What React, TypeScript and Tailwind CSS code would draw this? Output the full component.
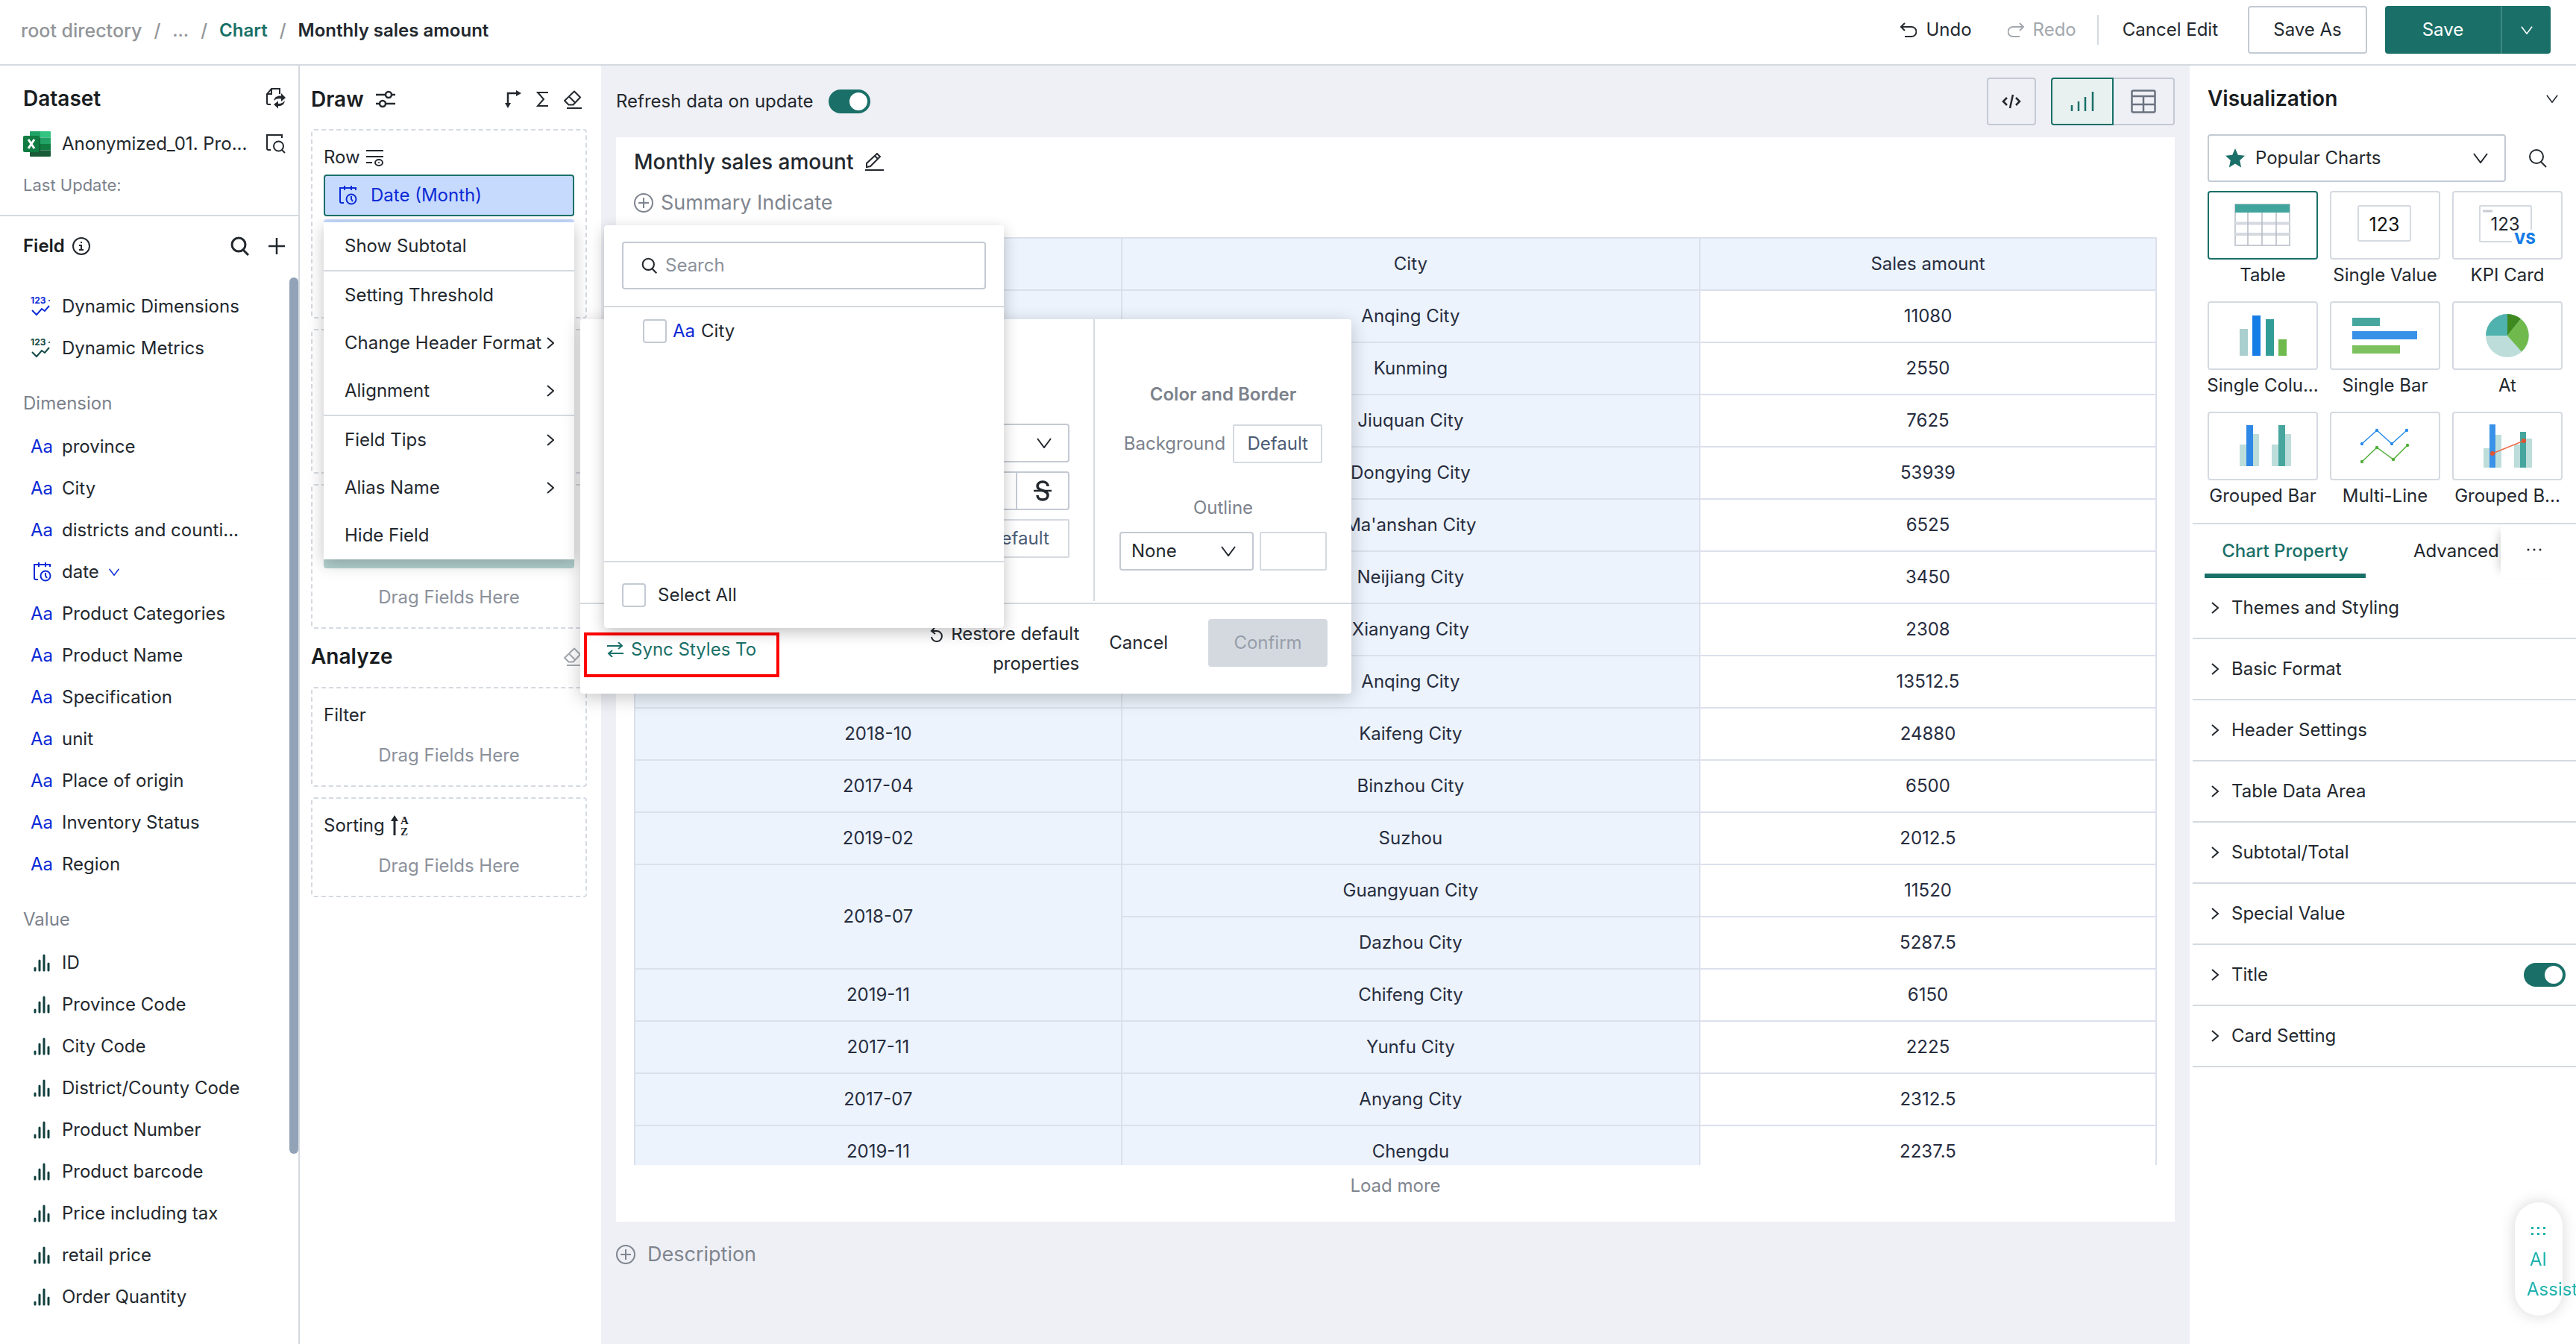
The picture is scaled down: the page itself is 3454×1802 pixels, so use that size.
import { useState } from 'react'
import type { ReactNode } from 'react'
import clsx from 'clsx'

interface SalesRow {
  date?: string
  span?: number
  city: string
  amount: string
}

const salesRows: SalesRow[] = [
  { date: '2018-05', city: 'Anqing City', amount: '11080' },
  { date: '2018-11', city: 'Kunming', amount: '2550' },
  { date: '2019-05', city: 'Jiuquan City', amount: '7625' },
  { date: '2018-06', city: 'Dongying City', amount: '53939' },
  { date: '2017-09', city: "Ma'anshan City", amount: '6525' },
  { date: '2018-02', city: 'Neijiang City', amount: '3450' },
  { date: '2017-12', city: 'Xianyang City', amount: '2308' },
  { date: '2019-08', city: 'Anqing City', amount: '13512.5' },
  { date: '2018-10', city: 'Kaifeng City', amount: '24880' },
  { date: '2017-04', city: 'Binzhou City', amount: '6500' },
  { date: '2019-02', city: 'Suzhou', amount: '2012.5' },
  { date: '2018-07', span: 2, city: 'Guangyuan City', amount: '11520' },
  { city: 'Dazhou City', amount: '5287.5' },
  { date: '2019-11', city: 'Chifeng City', amount: '6150' },
  { date: '2017-11', city: 'Yunfu City', amount: '2225' },
  { date: '2017-07', city: 'Anyang City', amount: '2312.5' },
  { date: '2019-11', city: 'Chengdu', amount: '2237.5' },
]

const dimensions = [
  'province',
  'City',
  'districts and counti...',
  'date',
  'Product Categories',
  'Product Name',
  'Specification',
  'unit',
  'Place of origin',
  'Inventory Status',
  'Region',
]

const values = [
  'ID',
  'Province Code',
  'City Code',
  'District/County Code',
  'Product Number',
  'Product barcode',
  'Price including tax',
  'retail price',
  'Order Quantity',
]

const chartTypes = [
  'Table',
  'Single Value',
  'KPI Card',
  'Single Colu...',
  'Single Bar',
  'At',
  'Grouped Bar',
  'Multi-Line',
  'Grouped B...',
]

const properties = [
  'Themes and Styling',
  'Basic Format',
  'Header Settings',
  'Table Data Area',
  'Subtotal/Total',
  'Special Value',
  'Title',
  'Card Setting',
]

const ChevronDown = ({ className = 'h-3.5 w-5' }: { className?: string }) => (
  <svg className={className} viewBox="0 0 20 14" fill="none" stroke="currentColor" strokeWidth="2">
    <path d="M1 1l9 12 9-12" />
  </svg>
)

const ChevronRight = () => (
  <svg className="h-4 w-[10px] shrink-0" viewBox="0 0 10 16" fill="none" stroke="currentColor" strokeWidth="2">
    <path d="M1 1l8 7-8 7" />
  </svg>
)

const SearchIcon = ({ className, strokeWidth = 2 }: { className: string; strokeWidth?: number }) => (
  <svg className={className} viewBox="0 0 26 26" fill="none" stroke="currentColor" strokeWidth={strokeWidth}>
    <circle cx="11" cy="11" r="9" />
    <path d="M17 18l7 7" />
  </svg>
)

const EraserIcon = () => (
  <svg className="h-[26px] w-[26px]" viewBox="0 0 26 26" fill="none" stroke="currentColor" strokeWidth="2">
    <path d="M15 2.5l8 8-9.500 10H7.500L2 15z" strokeLinejoin="round" />
    <path d="M8 9.500l8 8M5 25h20" />
  </svg>
)

const CirclePlusIcon = () => (
  <svg className="h-[26px] w-[26px]" viewBox="0 0 26 26" fill="none" stroke="currentColor" strokeWidth="2">
    <circle cx="13" cy="13" r="12" />
    <path d="M13 6v14M6 13h14" />
  </svg>
)

const DateIcon = () => (
  <svg className="h-[26px] w-6" viewBox="0 0 24 26" fill="none" stroke="currentColor" strokeWidth="2">
    <path d="M6 23H3a2 2 0 0 1-2-2V3h21v3M7 0v6M16 0v6" />
    <circle cx="16" cy="18" r="6.500" />
    <path d="M16 14v4l2 3" />
  </svg>
)

const DynamicIcon = () => (
  <svg className="h-7 w-[26px] overflow-visible" viewBox="0 0 26 28" fill="none" stroke="currentColor" strokeWidth="2">
    <text x="0" y="10" fontSize="12" fontWeight="700" fontFamily="Inter" fill="currentColor" stroke="none">
      123
    </text>
    <circle cx="25" cy="6" r="1" fill="currentColor" stroke="none" />
    <path d="M2 19l6 6 7-8 4 3 6-7" />
  </svg>
)

const ValueIcon = () => (
  <svg className="h-6 w-[22px]" viewBox="0 0 22 24" fill="none" stroke="currentColor" strokeWidth="3" strokeLinecap="round">
    <path d="M2 19v3M8 9v13M14 2v20M20 13v9" />
  </svg>
)

const ExcelIcon = () => (
  <svg className="h-[34px] w-[37px]" viewBox="0 0 37 34">
    <path d="M9 1a1 1 0 0 1 1-1h13v8.500H9z" fill="#21a366" />
    <path d="M23 0h13a1 1 0 0 1 1 1v7.500H23z" fill="#33c481" />
    <path d="M9 8.500h14V17H9z" fill="#107c41" />
    <path d="M23 8.500h14V17H23z" fill="#21a366" />
    <path d="M23 17h14v8.500H23z" fill="#107c41" />
    <path d="M9 17h14v8.500h14V33a1 1 0 0 1-1 1H10a1 1 0 0 1-1-1z" fill="#185c37" />
    <path d="M9 8h12a2 2 0 0 1 2 2v18H9z" fill="#000" opacity=".25" />
    <rect y="6" width="22" height="22" rx="2" fill="#107c41" />
    <path d="M7 11l8 12M15 11L7 23" stroke="#fff" strokeWidth="3" />
  </svg>
)

const Toggle = ({ label, defaultChecked = true }: { label: string; defaultChecked?: boolean }) => (
  <input
    type="checkbox"
    role="switch"
    aria-label={label}
    defaultChecked={defaultChecked}
    className="flex h-8 w-14 shrink-0 appearance-none items-center rounded-full bg-gray-300 px-1 before:size-6 before:rounded-full before:bg-white checked:justify-end checked:bg-[#1a7068]"
  />
)

const checkboxClass =
  'size-8 shrink-0 appearance-none rounded-sm border-2 border-[#c3cad3] bg-white checked:bg-[#1a7068]'

function TopBar() {
  return (
    <header className="flex h-[88px] items-center justify-between border-b-2 border-[#d5dae1] pl-7 pr-[34px]">
      <nav className="flex items-center gap-4 pb-1 font-medium text-[#929599]">
        <a href="#root" className="text-[25px]">root directory</a>
        <span>/</span>
        <a href="#parent">...</a>
        <span>/</span>
        <a href="#chart" className="font-semibold text-[#1a7068]">Chart</a>
        <span>/</span>
        <span className="font-semibold text-[#23282e]">Monthly sales amount</span>
      </nav>
      <div className="flex items-center pb-1.5">
        <button className="flex items-center gap-3">
          <svg className="h-5 w-[22px]" viewBox="0 0 22 20" fill="none" stroke="currentColor" strokeWidth="2">
            <path d="M6 1L1 6l5 5M1 6h14a6 6 0 0 1 0 13H6" />
          </svg>
          Undo
        </button>
        <button className="ml-12 flex items-center gap-3 text-[#a3a8ae]">
          <svg className="h-5 w-[22px]" viewBox="0 0 22 20" fill="none" stroke="currentColor" strokeWidth="2">
            <path d="M16 1l5 5-5 5M21 6H7a6 6 0 0 0 0 13h9" />
          </svg>
          Redo
        </button>
        <span className="ml-7 mr-8 h-10 w-0.5 bg-[#d5dae1]" />
        <button>Cancel Edit</button>
        <button className="ml-10 h-16 w-40 rounded-sm border-2 border-[#c3cad3]">Save As</button>
        <div className="ml-6 flex h-16 divide-x-2 divide-[#3d8a82] overflow-hidden rounded-sm bg-[#1a7068] text-white">
          <button className="w-[157px]">Save</button>
          <button aria-label="More save options" className="flex w-[65px] items-center justify-center">
            <ChevronDown className="h-[11px] w-[18px]" />
          </button>
        </div>
      </div>
    </header>
  )
}

function FieldRow({ icon, children }: { icon: ReactNode; children: ReactNode }) {
  return (
    <li className="flex h-14 items-center">
      <span className="flex w-[52px] shrink-0 items-center pl-2.5">{icon}</span>
      {children}
    </li>
  )
}

const Aa = () => <span className="text-[#0c2bd6]">Aa</span>

function DatasetPanel() {
  return (
    <aside className="w-[402px] shrink-0 border-r-2 border-[#d5dae1]">
      <section className="border-b-2 border-[#d5dae1] pb-6 pl-[31px] pr-[17px]">
        <div className="flex h-[88px] items-center justify-between">
          <h2 className="text-[28px] font-semibold text-[#191d21]">Dataset</h2>
          <button aria-label="Replace dataset">
            <svg className="h-7 w-[26px]" viewBox="0 0 26 28" fill="none" stroke="currentColor" strokeWidth="2">
              <path d="M6 22H3a2 2 0 0 1-2-2V8l6-7h11v7M1 8h6V1" />
              <path d="M10 17c1-5 5-7 10-6.500V7l6 6-6 5v-3.500c-4-.5-7 0-10 2.500z" fill="currentColor" stroke="none" />
              <path d="M25 17c-1 5-4 7.500-9 7v3.500l-6-5.500 6-4.500V21c4 .3 6-1 9-4z" fill="currentColor" stroke="none" />
            </svg>
          </button>
        </div>
        <div className="flex h-[34px] items-center">
          <ExcelIcon />
          <span className="ml-[15px] flex-1 truncate">Anonymized_01. Pro...</span>
          <button aria-label="Preview dataset">
            <svg className="h-[26px] w-[26px]" viewBox="0 0 26 26" fill="none" stroke="currentColor" strokeWidth="2">
              <path d="M6 21H3a2 2 0 0 1-2-2V1h20v4" />
              <circle cx="16.500" cy="16" r="6.500" />
              <path d="M21 21l4 4" />
            </svg>
          </button>
        </div>
        <p className="mt-[22px] text-[22px] text-[#7c828c]">Last Update:</p>
      </section>

      <section className="relative">
        <div className="flex h-20 items-center pl-[31px] pr-[17px]">
          <h3 className="font-semibold text-[#191d21]">Field</h3>
          <svg className="ml-2.5 size-6" viewBox="0 0 24 24" fill="none" stroke="currentColor" strokeWidth="2">
            <circle cx="12" cy="12" r="11" />
            <path d="M12 10v7M9 11h3M9 17h6M12 6v2" />
          </svg>
          <button aria-label="Search fields" className="ml-auto">
            <SearchIcon className="size-[26px]" strokeWidth={3} />
          </button>
          <button aria-label="Add field" className="ml-6">
            <svg className="size-6" viewBox="0 0 24 24" fill="none" stroke="currentColor" strokeWidth="2.500">
              <path d="M12 1v22M1 12h22" />
            </svg>
          </button>
        </div>
        <div className="pl-[31px] pt-[13px]">
          <ul>
            <FieldRow icon={<span className="text-[#0c2bd6]"><DynamicIcon /></span>}>Dynamic Dimensions</FieldRow>
            <FieldRow icon={<span className="text-[#0d4744]"><DynamicIcon /></span>}>Dynamic Metrics</FieldRow>
          </ul>
          <h4 className="pb-3.5 pt-[30px] text-[#7c828c]">Dimension</h4>
          <ul>
            {dimensions.map((name) => (
              <FieldRow key={name} icon={name === 'date' ? <span className="pl-1 text-[#0c2bd6]"><DateIcon /></span> : <Aa />}>
                {name}
                {name === 'date' && (
                  <span className="pl-3 text-[#0c2bd6]"><ChevronDown className="h-[10px] w-4" /></span>
                )}
              </FieldRow>
            ))}
          </ul>
          <h4 className="pb-3.5 pt-[30px] text-[#7c828c]">Value</h4>
          <ul>
            {values.map((name) => (
              <FieldRow key={name} icon={<span className="pl-1 text-[#0f3f3d]"><ValueIcon /></span>}>{name}</FieldRow>
            ))}
          </ul>
        </div>
        <span className="absolute right-0 top-[82px] h-[1175px] w-3 rounded-full bg-[#92a3b8]" />
      </section>
    </aside>
  )
}

const StylePopup = () => (
  <div className="absolute left-[344px] top-[130px] z-20 w-[1034px] rounded-sm bg-white shadow-[0_6px_24px_rgba(0,0,0,0.22)]">
    <div className="flex h-[382px] border-b-2 border-[#d5dae1] pb-0.5">
      <div className="flex w-[690px] flex-col items-end border-r-2 border-[#d5dae1] pr-8 pt-[140px]">
        <div className="relative flex items-center">
          <select aria-label="Font family" className="h-[52px] w-[300px] appearance-none rounded-sm border-2 border-[#c3cad3] px-4">
            <option>Default</option>
          </select>
          <span className="pointer-events-none absolute right-6"><ChevronDown /></span>
        </div>
        <div className="mt-3 flex h-[52px] divide-x-2 divide-[#c3cad3] rounded-sm border-2 border-[#c3cad3]">
          <button className="w-[68px] font-bold">B</button>
          <button className="w-[68px] italic">I</button>
          <button className="w-[68px] underline">U</button>
          <button aria-label="Strikethrough" className="flex w-[68px] items-center justify-center">
            <svg className="h-7 w-6" viewBox="0 0 24 28" fill="none" stroke="currentColor" strokeWidth="3.500">
              <path d="M19 8c0-4-3-6-7-6S5 4 5 8c0 7 14 4 14 12 0 4-3 6-7 6s-7-2-7-6" />
              <path d="M0 14h24" strokeWidth="2.500" />
            </svg>
          </button>
        </div>
        <button className="mt-3 h-[52px] w-[136px] rounded-xs border-2 border-[#d5dae1] text-[#4b5b74]">Default</button>
      </div>
      <div className="flex flex-1 flex-col items-center pt-[85px] text-[#7c828c]">
        <h5 className="font-semibold">Color and Border</h5>
        <div className="mt-6 flex items-center gap-2.5">
          Background
          <button className="h-[52px] w-[120px] rounded-xs border-2 border-[#d5dae1] text-[#4b5b74]">Default</button>
        </div>
        <div className="mt-11">Outline</div>
        <div className="mt-4 flex gap-2">
          <div className="relative flex items-center">
            <select aria-label="Outline" className="h-[52px] w-[180px] appearance-none rounded-sm border-2 border-[#c3cad3] px-3.5 text-[#23282e]">
              <option>None</option>
            </select>
            <span className="pointer-events-none absolute right-6 text-[#23282e]"><ChevronDown /></span>
          </div>
          <button aria-label="Outline color" className="h-[52px] w-[90px] rounded-xs border-2 border-[#d5dae1]" />
        </div>
      </div>
    </div>
    <div className="flex h-[120px] items-start justify-between pl-[5px] pr-8">
      <div className="relative mt-[38px]">
        <button className="flex h-[60px] w-[262px] items-start gap-2.5 border-4 border-[#ff0000] pl-[27px] pt-[3px] text-[#1a7068]">
          <svg className="mt-1.5 h-5 w-[22px]" viewBox="0 0 22 20" fill="none" stroke="currentColor" strokeWidth="2">
            <path d="M0 5h20M15 0l5 5-5 4M22 15H2M7 11l-5 4 5 5" />
          </svg>
          Sync Styles To
        </button>
        <SyncDropdown />
      </div>
      <div className="flex items-start pt-5">
        <button className="flex w-[220px] justify-end text-right leading-10">
          <svg className="mr-2 mt-3 h-5 w-[18px]" viewBox="0 0 18 20" fill="none" stroke="currentColor" strokeWidth="2">
            <path d="M6 0L2 4l5 4M2 4h7a7 7 0 1 1-7 8" />
          </svg>
          <span className="w-[174px]">Restore default properties</span>
        </button>
        <button className="ml-10 h-16">Cancel</button>
        <button disabled className="ml-[54px] h-16 w-40 rounded-sm bg-[#d4d9e0] text-[#969ea9]">Confirm</button>
      </div>
    </div>
  </div>
)

const SyncDropdown = () => (
  <div className="absolute bottom-[66px] left-[27px] z-30 w-[536px] rounded-sm bg-white shadow-[0_6px_20px_rgba(0,0,0,0.24)]">
    <div className="border-b-2 border-[#d5dae1] px-6 py-[22px]">
      <label className="flex h-16 items-center gap-2.5 rounded-sm border-2 border-[#c3cad3] px-6">
        <SearchIcon className="size-[22px] shrink-0" strokeWidth={2.5} />
        <input type="text" placeholder="Search" className="w-full outline-none placeholder:text-[#8b919b]" />
      </label>
    </div>
    <label className="flex h-[340px] items-start gap-2 px-[52px] pt-4">
      <input type="checkbox" className={checkboxClass} />
      <Aa />
      City
    </label>
    <label className="flex h-[90px] items-center gap-4 border-t-2 border-[#d5dae1] px-6">
      <input type="checkbox" className={checkboxClass} />
      Select All
    </label>
  </div>
)

const menuGroups = [
  ['Show Subtotal'],
  ['Setting Threshold', 'Change Header Format', 'Alignment'],
  ['Field Tips', 'Alias Name', 'Hide Field'],
]

const withSubmenu = ['Change Header Format', 'Alignment', 'Field Tips', 'Alias Name']

function FieldMenu() {
  return (
    <div className="absolute left-0 right-0 top-16 z-10 bg-white text-[#23282e] shadow-[0_6px_20px_rgba(0,0,0,0.24)]">
      <div className="divide-y-2 divide-[#d5dae1]">
        {menuGroups.map((group) => (
          <ul key={group[0]}>
            {group.map((item) => (
              <li key={item}>
                <button className="flex h-16 w-full items-center justify-between whitespace-nowrap pl-7 pr-[27px]">
                  {item}
                  {withSubmenu.includes(item) && <ChevronRight />}
                </button>
              </li>
            ))}
          </ul>
        ))}
      </div>
      <StylePopup />
    </div>
  )
}

function DropZone({ title, icon, children }: { title: string; icon?: ReactNode; children?: ReactNode }) {
  return (
    <section className="rounded-sm border-2 border-dashed border-[#d5dae1] px-[15px] pb-6 pt-5">
      <h4 className="flex h-8 items-center gap-2">
        {title}
        {icon}
      </h4>
      {children ?? <div className="h-[22px]" />}
      <p className="text-center text-[#8b919b]">Drag Fields Here</p>
    </section>
  )
}

function DrawPanel() {
  return (
    <aside className="w-[404px] shrink-0 pl-[15px] pr-[19px]">
      <div className="flex h-[85px] items-center pt-1">
        <h2 className="text-[28px] font-semibold text-[#191d21]">Draw</h2>
        <svg className="ml-4 h-6 w-[26px]" viewBox="0 0 26 24" fill="none" stroke="currentColor" strokeWidth="2.500">
          <path d="M0 6h13M21 6h5M0 18h5M13 18h13" />
          <circle cx="17" cy="6" r="4" />
          <circle cx="9" cy="18" r="4" />
        </svg>
        <div className="ml-auto flex items-center gap-5 pr-1.5">
          <button aria-label="Swap rows and columns">
            <svg className="h-6 w-[22px]" viewBox="0 0 22 24" fill="none" stroke="currentColor" strokeWidth="2.500">
              <path d="M4 18V4h12" />
              <path d="M15 0l7 4-7 4zM0 17h8l-4 7z" fill="currentColor" stroke="none" />
            </svg>
          </button>
          <button aria-label="Totals">
            <svg className="h-5 w-4" viewBox="0 0 16 20" fill="none" stroke="currentColor" strokeWidth="2">
              <path d="M16 1H2l8 9-8 9h14" />
            </svg>
          </button>
          <button aria-label="Clear fields"><EraserIcon /></button>
        </div>
      </div>
      <div className="flex flex-col gap-3.5">
        <DropZone
          title="Row"
          icon={
            <svg className="h-6 w-6" viewBox="0 0 24 24" fill="none" stroke="currentColor" strokeWidth="2">
              <path d="M0 3h23M0 11h23M0 19h8" />
              <ellipse cx="17" cy="19" rx="5" ry="4" />
              <circle cx="17" cy="19" r="1" fill="currentColor" stroke="none" />
            </svg>
          }
        >
          <div className="relative mb-[19px] mt-[7px] flex flex-col gap-1 text-[#0c2bd6]">
            <button className="flex h-14 items-center gap-[18px] rounded-sm border-2 border-[#1a7068] bg-[#c6dafe] px-[19px]">
              <DateIcon />
              Date (Month)
            </button>
            <button aria-label="City" className="h-14 rounded-sm bg-[#c6dafe]" />
            <FieldMenu />
          </div>
        </DropZone>
        <DropZone title="Column">
          <div className="mb-[19px] mt-[7px] h-14" />
        </DropZone>
        <DropZone title="Value">
          <button aria-label="Sales amount" className="mb-[23px] mt-[3px] block h-14 w-full rounded-sm bg-[#b5d4d2]" />
        </DropZone>
      </div>
      <div className="flex h-[78px] items-center justify-between pb-1 pr-1.5">
        <h2 className="text-[28px] font-semibold text-[#191d21]">Analyze</h2>
        <button aria-label="Clear analysis" className="text-[#a3a8ae]"><EraserIcon /></button>
      </div>
      <div className="flex flex-col gap-3.5">
        <DropZone title="Filter" />
        <DropZone
          title="Sorting"
          icon={
            <svg className="h-7 w-6 overflow-visible" viewBox="0 0 24 28" fill="none" stroke="currentColor" strokeWidth="3">
              <path d="M5 27V5" />
              <path d="M5 0l5 8H0z" fill="currentColor" stroke="none" />
              <text x="13" y="12" fontSize="15" fontWeight="700" fontFamily="Liberation Serif" fill="currentColor" stroke="none">A</text>
              <text x="13" y="27" fontSize="15" fontWeight="700" fontFamily="Liberation Serif" fill="currentColor" stroke="none">Z</text>
            </svg>
          }
        />
      </div>
    </aside>
  )
}

function SalesTable() {
  return (
    <table className="w-full table-fixed border-collapse text-center text-[#272d3f]">
      <colgroup>
        <col className="w-[32%]" />
        <col className="w-[38%]" />
        <col className="w-[30%]" />
      </colgroup>
      <thead>
        <tr className="h-[70px] bg-[#ecf3fc]">
          <th className="border-2 border-[#dbe0ec] font-normal">Date (Month)</th>
          <th className="border-2 border-[#dbe0ec] font-normal">City</th>
          <th className="border-2 border-[#dbe0ec] font-normal">Sales amount</th>
        </tr>
      </thead>
      <tbody>
        {salesRows.map((row, index) => (
          <tr key={index} className="h-[70px]">
            {row.date && (
              <td rowSpan={row.span} className="border-2 border-[#dbe0ec] bg-[#ecf3fc]">{row.date}</td>
            )}
            <td className="border-2 border-[#dbe0ec] bg-[#ecf3fc]">{row.city}</td>
            <td className="border-2 border-[#dbe0ec]">{row.amount}</td>
          </tr>
        ))}
      </tbody>
    </table>
  )
}

function ChartArea() {
  return (
    <main className="min-w-0 flex-1 bg-[#eff0f6] px-5">
      <div className="flex h-24 items-center">
        <label className="flex items-center gap-5">
          Refresh data on update
          <Toggle label="Refresh data on update" />
        </label>
        <button aria-label="Code" className="ml-auto flex h-16 w-[66px] items-center justify-center rounded-sm border-2 border-[#c3cad3]">
          <svg className="h-5 w-[26px]" viewBox="0 0 26 20" fill="none" stroke="currentColor" strokeWidth="2.500">
            <path d="M7 5l-5 5 5 5M19 5l5 5-5 5M15 1l-4 18" />
          </svg>
        </button>
        <div className="ml-5 flex h-16">
          <button aria-label="Chart view" className="flex w-[84px] items-center justify-center rounded-l-sm border-2 border-[#1a7068] bg-[#e8f1ef] text-[#1a7068]">
            <svg className="h-[26px] w-8" viewBox="0 0 32 26" fill="none" stroke="currentColor" strokeWidth="2.500">
              <path d="M2 26v-8M11 26V13M20 26V7M30 26V0" />
            </svg>
          </button>
          <button aria-label="Table view" className="flex w-[82px] items-center justify-center rounded-r-sm border-2 border-l-0 border-[#c3cad3] text-[#6b7280]">
            <svg className="h-8 w-[34px]" viewBox="0 0 34 32" fill="none" stroke="currentColor" strokeWidth="2.500">
              <rect x="1.500" y="1.500" width="31" height="29" rx="2" />
              <path d="M2 9h30M2 20h30M17 9v21" />
            </svg>
          </button>
        </div>
      </div>

      <section className="bg-white px-6 pb-8 pt-[13px]">
        <h1 className="flex items-center gap-4 text-[28px] font-medium leading-10 text-[#23282e]">
          Monthly sales amount
          <button aria-label="Rename">
            <svg className="h-6 w-[25px]" viewBox="0 0 25 24" fill="none" stroke="currentColor" strokeWidth="2">
              <path d="M2 19v-5L16 1l4 4L7 18zM13 4l4 4M0 23h25" />
            </svg>
          </button>
        </h1>
        <button className="mt-[15px] flex items-center gap-2.5 text-[27px] leading-10 text-[#7f858e]">
          <CirclePlusIcon />
          Summary Indicate
        </button>
        <div className="mt-[26px] h-[1244px] overflow-hidden">
          <SalesTable />
        </div>
        <div className="mt-3 text-center text-[#7f858e]">
          <button>Load more</button>
        </div>
      </section>
      <button className="mt-6 flex items-center gap-4 text-[27px] leading-10 text-[#7f858e]">
        <CirclePlusIcon />
        Description
      </button>
    </main>
  )
}

/* Thumbnails share the 148x92 box of the card */
function ChartThumb({ name }: { name: string }) {
  switch (name) {
    case 'Table':
      return (
        <>
          <rect x="37" y="18" width="73" height="55" fill="#fff" stroke="#b5bac4" strokeWidth="1.500" />
          <rect x="37" y="18" width="73" height="11" fill="#42a59d" />
          <path d="M37 43.500h73M37 58h73" stroke="#d5dae1" strokeWidth="4" />
          <path d="M54 29v44M73 29v44M92 29v44" stroke="#b5bac4" strokeWidth="1.500" />
        </>
      )
    case 'Single Value':
      return (
        <>
          <rect x="38" y="20" width="70" height="47" rx="2" fill="#fff" stroke="#d5dae1" strokeWidth="2" />
          <text x="73" y="54" textAnchor="middle" fontSize="25" fontFamily="Inter" fill="#111">123</text>
        </>
      )
    case 'KPI Card':
      return (
        <>
          <path d="M80 68H38a1 1 0 0 1-1-1V21a1 1 0 0 1 1-1h67a1 1 0 0 1 1 1v31" fill="none" stroke="#d5dae1" strokeWidth="2" />
          <path d="M41 27h13" stroke="#c8ccd2" strokeWidth="3" />
          <text x="71" y="53" textAnchor="middle" fontSize="24" fontFamily="Inter" fill="#23282e">123</text>
          <text x="83" y="71" fontSize="20" fontWeight="800" fontFamily="Inter" fill="#167ce6">VS</text>
        </>
      )
    case 'Single Colu...':
      return (
        <>
          <path d="M43 37h11v36H43z" fill="#a9cfce" />
          <path d="M60 19h11v54H60z" fill="#167ce6" />
          <path d="M78 24h11v49H78z" fill="#329c96" />
          <path d="M95 51h11v22H95z" fill="#6fba4d" />
        </>
      )
    case 'Single Bar':
      return (
        <>
          <path d="M30 22h37v11H30z" fill="#46a69e" />
          <path d="M30 40h87v11H30z" fill="#3a91e8" />
          <path d="M30 59h64v11H30z" fill="#7dc05e" />
        </>
      )
    case 'At':
      return (
        <>
          <circle cx="74" cy="46" r="29" fill="#bddddb" />
          <path d="M74 46H45a29 29 0 0 1 29-29z" fill="#4fb2ae" />
          <path d="M74 46V17a29 29 0 0 1 18 6.500z" fill="#3f8a20" />
          <path d="M74 46l18-22.500a29 29 0 0 1 1 44z" fill="#70ba4d" />
        </>
      )
    case 'Grouped Bar':
      return (
        <>
          <path d="M43 44h26v29H43zM60 30h9v43h-9zM86 44h26v29H86zM103 30h9v43h-9z" fill="#bddddb" />
          <path d="M52 18h9v55h-9z" fill="#2f88e6" />
          <path d="M95 18h9v55h-9z" fill="#46a69e" />
        </>
      )
    case 'Multi-Line':
      return (
        <>
          <path d="M43 43l20-18 20 18 20-18" fill="none" stroke="#2a8ceb" strokeWidth="1.500" />
          <path d="M43 67l20-19 22 16 19-19" fill="none" stroke="#51b03a" strokeWidth="1.500" />
          {[[43, 43], [63, 25], [83, 43], [103, 25]].map(([x, y]) => (
            <circle key={x} cx={x} cy={y} r="2.200" fill="#2a8ceb" />
          ))}
          {[[43, 67], [63, 48], [85, 64], [104, 45]].map(([x, y]) => (
            <circle key={x} cx={x} cy={y} r="2.200" fill="#51b03a" />
          ))}
        </>
      )
    default:
      return (
        <>
          <path d="M42 49h24v26H42zM58 31h8v44h-8zM83 44h24v31H83zM98 36h9v39h-9z" fill="#bddddb" />
          <path d="M50 17h8v58h-8z" fill="#3a91e8" />
          <path d="M91 27h8v48h-8z" fill="#46a69e" />
          <path d="M54 56l42-17" stroke="#ef6b4d" strokeWidth="1.500" />
          <circle cx="54" cy="56" r="3" fill="#e2532f" />
          <circle cx="96" cy="39" r="3" fill="#e2532f" />
        </>
      )
  }
}

function VisualizationPanel() {
  const [selected, setSelected] = useState('Table')

  return (
    <aside className="w-[518px] shrink-0">
      <div className="pb-5 pl-6 pr-[18px]">
        <div className="flex h-[88px] items-center justify-between pr-[5px]">
          <h2 className="text-[28px] font-semibold text-[#191d21]">Visualization</h2>
          <button aria-label="Collapse"><ChevronDown className="h-[11px] w-[18px]" /></button>
        </div>
        <div className="mt-1 flex items-center justify-between">
          <div className="relative flex items-center">
            <svg className="pointer-events-none absolute left-6 size-[26px]" viewBox="0 0 24 24" fill="#1a7068">
              <path d="M12 0l3.500 8 8.500 1-6.300 5.800L19.500 23.500 12 19l-7.500 4.500 1.800-8.700L0 9l8.500-1z" />
            </svg>
            <select aria-label="Chart group" className="h-16 w-[400px] appearance-none rounded-sm border-2 border-[#c3cad3] pl-[62px]">
              <option>Popular Charts</option>
            </select>
            <span className="pointer-events-none absolute right-6"><ChevronDown /></span>
          </div>
          <button aria-label="Search charts" className="pr-5">
            <SearchIcon className="size-[26px]" />
          </button>
        </div>
        <div className="mt-3 grid grid-cols-3 gap-x-4 gap-y-[19px]">
          {chartTypes.map((name) => (
            <button key={name} onClick={() => setSelected(name)} className="flex min-w-0 flex-col items-center">
              <span
                className={clsx(
                  'flex h-[92px] w-full items-center justify-center rounded-sm border-2',
                  name === selected ? 'border-[#1a7068]' : 'border-[#d5dae1]'
                )}
              >
                <svg className="h-[92px] w-[148px] shrink-0" viewBox="0 0 148 92">
                  <ChartThumb name={name} />
                </svg>
              </span>
              <span className="mt-[5px] whitespace-nowrap">{name}</span>
            </button>
          ))}
        </div>
      </div>

      <div className="ml-1 border-t-2 border-[#d5dae1]">
        <div className="flex h-[72px] pl-4">
          <button className="w-[216px] border-b-[6px] border-[#1a7068] pt-1.5 font-medium text-[#1a7068]">Chart Property</button>
          <button className="ml-10 px-6">Advanced</button>
          <button
            aria-label="More tabs"
            className="-ml-[22px] flex-1 bg-white pb-1 shadow-[-12px_0_12px_-10px_rgba(0,0,0,0.18)]"
          >
            <svg className="mx-auto h-1 w-[30px] pr-2.5" viewBox="0 0 20 4" fill="currentColor">
              <circle cx="2" cy="2" r="1.500" />
              <circle cx="10" cy="2" r="1.500" />
              <circle cx="18" cy="2" r="1.500" />
            </svg>
          </button>
        </div>
        <ul>
          {properties.map((name) => (
            <li key={name} className="flex h-[82px] items-center justify-between border-b-2 border-[#d5dae1] pl-[25px] pr-3.5">
              <button className="flex items-center gap-[17px]">
                <ChevronRight />
                {name}
              </button>
              {name === 'Title' && <Toggle label="Show title" />}
            </li>
          ))}
        </ul>
      </div>
    </aside>
  )
}

export default function App() {
  return (
    <div className="flex min-h-screen flex-col overflow-hidden bg-white font-['Inter',sans-serif] text-[24px] leading-8 text-[#23282e]">
      <TopBar />
      <div className="flex flex-1">
        <DatasetPanel />
        <DrawPanel />
        <ChartArea />
        <VisualizationPanel />
      </div>
      <button className="fixed bottom-[38px] right-[18px] flex h-[152px] w-16 flex-col items-start rounded-full bg-white pt-[33px] leading-10 text-[#1fb2ae] shadow-[0_0_20px_rgba(0,0,0,0.16)]">
        <svg className="mb-3 ml-[22px] h-3 w-5" viewBox="0 0 20 12" fill="currentColor">
          <path d="M0 0h3v3H0zM8 0h3v3H8zM16 0h3v3h-3zM0 8h3v3H0zM8 8h3v3H8zM16 8h3v3h-3z" />
        </svg>
        <span className="pl-5">AI</span>
        <span className="pl-4">Assist</span>
      </button>
    </div>
  )
}
